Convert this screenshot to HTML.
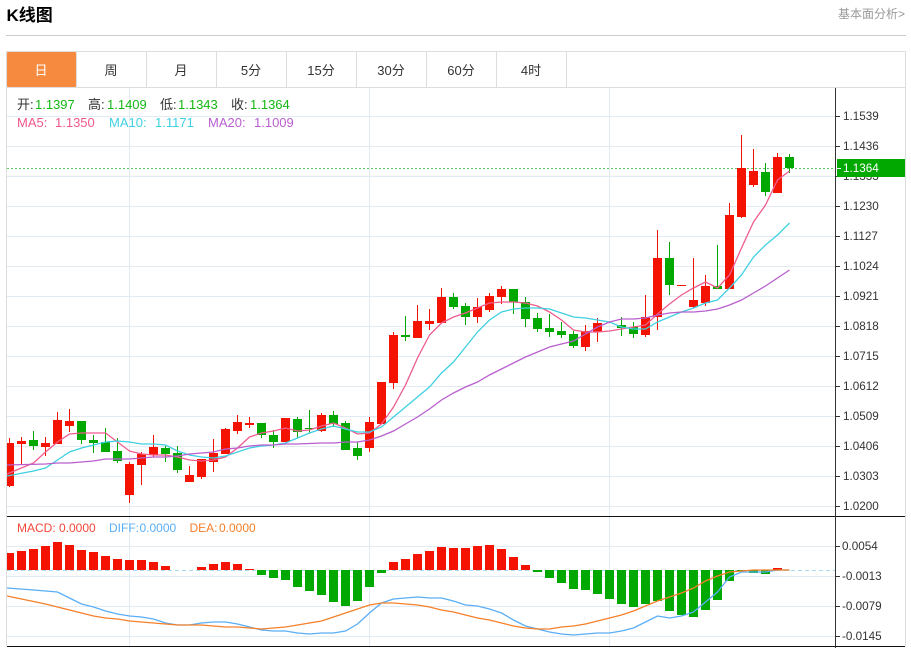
<!DOCTYPE html>
<html><head><meta charset="utf-8"><style>
html,body{margin:0;padding:0;background:#fff;width:911px;height:648px;overflow:hidden}
svg{display:block;position:absolute;left:0;top:0}
text{font-family:"Liberation Sans","Noto Sans CJK SC",sans-serif;font-size:13px}
.t{fill:#333;text-anchor:middle;font-size:13px}
.a{fill:#333;font-size:11.7px}
</style></head><body>
<svg width="911" height="648" viewBox="0 0 911 648">
<defs><clipPath id="c"><rect x="7" y="88" width="828" height="558"/></clipPath></defs>
<text x="6.5" y="21" style="font-size:17px;font-weight:bold;fill:#000">K线图</text>
<text x="905" y="18" text-anchor="end" style="font-size:12px;fill:#999">基本面分析&gt;</text>
<path d="M6 35.5H906" stroke="#ccc" fill="none"/>
<path d="M6.5 52V646M905.5 52V646M6 51.5H906M7 87.5H905" stroke="#ddd" fill="none"/>
<rect x="7" y="52" width="69" height="35" rx="1" fill="#f68b3f"/>
<path d="M76.5 52V87M146.5 52V87M216.5 52V87M286.5 52V87M356.5 52V87M426.5 52V87M496.5 52V87M566.5 52V87" stroke="#ddd" fill="none"/>
<text class="t" x="41" y="75" style="fill:#fff">日</text>
<text class="t" x="111" y="75">周</text>
<text class="t" x="181" y="75">月</text>
<text class="t" x="251" y="75">5分</text>
<text class="t" x="321" y="75">15分</text>
<text class="t" x="391" y="75">30分</text>
<text class="t" x="461" y="75">60分</text>
<text class="t" x="531" y="75">4时</text>
<path d="M7 116.5H835M7 146.5H835M7 176.5H835M7 206.5H835M7 236.5H835M7 266.5H835M7 296.5H835M7 326.5H835M7 356.5H835M7 386.5H835M7 416.5H835M7 446.5H835M7 476.5H835M7 506.5H835M7 546.5H835M7 576.5H835M7 606.5H835M7 636.5H835M129.5 88V646M369.5 88V646M609.5 88V646" stroke="#e2ebf2" fill="none"/>
<path d="M7 168.5H835" stroke="#62c962" stroke-dasharray="2 2" fill="none"/>
<path d="M7 570.5H835" stroke="#a8dcef" stroke-dasharray="4 3" fill="none"/>
<g clip-path="url(#c)" fill="none">
<path stroke="#f31300" d="M9.5 438V487M21.5 437V465M45.5 437V456M57.5 412V444M69.5 409V432M129.5 462V503M141.5 452V485M153.5 435V457M189.5 466V482M201.5 459V479M213.5 439V472M225.5 428V454M237.5 415V434M249.5 417V428M285.5 418V442M321.5 413V432M369.5 417V452M381.5 382V424M393.5 332V389M417.5 305V338M429.5 309V330M441.5 288V323M477.5 298V323M489.5 293V312M501.5 286V304M585.5 325V351M597.5 318V342M645.5 295V337M657.5 230V330M693.5 258V308M705.5 275V306M729.5 203V289M741.5 135V218M753.5 149V187M777.5 153V193"/>
<path stroke="#f31300" stroke-width="9" d="M9.5 443V486M21.5 441V444M45.5 443V447M57.5 420V444M69.5 421V426M129.5 464V495M141.5 454V465M153.5 447V455M189.5 475V482M201.5 459V477M213.5 453V462M225.5 429V454M237.5 422V431M249.5 423V425M285.5 418V442M321.5 415V431M369.5 422V448M381.5 382V424M393.5 335V383M417.5 321V338M429.5 321V324M441.5 297V323M477.5 307V317M489.5 296V310M501.5 289V297M585.5 331V347M597.5 323V332M645.5 317V335M657.5 258V317M681.5 285V286M693.5 300V307M705.5 286V303M729.5 215V289M741.5 168V217M753.5 171V185M777.5 157V193"/>
<path stroke="#00a800" d="M33.5 431V450M81.5 421V444M93.5 435V453M105.5 428V452M117.5 438V463M165.5 446V462M177.5 446V473M261.5 423V438M273.5 430V448M297.5 417V438M309.5 410V433M333.5 411V427M345.5 421V450M357.5 442V460M405.5 316V341M453.5 293V309M465.5 303V325M513.5 289V314M525.5 297V327M537.5 313V332M549.5 314V337M561.5 322V338M573.5 331V348M621.5 317V336M633.5 322V338M669.5 242V295M717.5 245V289M765.5 163V196M789.5 154V173"/>
<path stroke="#00a800" stroke-width="9" d="M33.5 440V446M81.5 421V440M93.5 440V443M105.5 442V452M117.5 451V461M165.5 448V454M177.5 453V470M261.5 423V435M273.5 435V442M297.5 419V432M309.5 428V429M333.5 415V424M345.5 423V450M357.5 448V456M405.5 335V337M453.5 297V307M465.5 306V317M513.5 289V302M525.5 302V319M537.5 318V329M549.5 328V332M561.5 331V335M573.5 334V346M621.5 325V328M633.5 327V334M669.5 258V285M717.5 286V289M765.5 172V192M789.5 157V168"/>
<path stroke="#f05c8e" stroke-width="1.3" d="M7 474L33.5 463L45.5 452L57.5 442L69.5 434L81.5 433L93.5 433L105.5 433L117.5 442L129.5 451L141.5 454L153.5 455L165.5 455L177.5 457L189.5 460L201.5 461L213.5 460L225.5 457L237.5 448L249.5 437L261.5 433L273.5 431L285.5 428L297.5 431L309.5 430L321.5 426L333.5 423L345.5 428L357.5 434L369.5 433L381.5 424L393.5 407L405.5 385L417.5 358L429.5 335L441.5 323L453.5 317L465.5 313L477.5 308L489.5 303L501.5 302L513.5 302L525.5 303L537.5 306L549.5 312L561.5 320L573.5 330L585.5 332L597.5 332L609.5 331L621.5 329L633.5 327L645.5 325L657.5 314L669.5 304L681.5 295L693.5 288L705.5 282L717.5 288L729.5 275L741.5 248L753.5 222L765.5 205L777.5 180L789.5 171"/>
<path stroke="#3fd0e2" stroke-width="1.3" d="M7 476L33.5 471L45.5 468L57.5 460L69.5 452L81.5 448L93.5 445L105.5 442L117.5 441L129.5 442L141.5 444L153.5 444L165.5 445L177.5 451L189.5 455L201.5 457L213.5 458L225.5 456L237.5 452L249.5 448L261.5 446L273.5 445L285.5 443L297.5 438L309.5 433L321.5 429L333.5 426L345.5 429L357.5 432L369.5 432L381.5 427L393.5 417L405.5 407L417.5 397L429.5 387L441.5 373L453.5 362L465.5 347L477.5 332L489.5 320L501.5 312L513.5 309L525.5 308L537.5 308L549.5 309L561.5 313L573.5 317L585.5 318L597.5 320L609.5 322L621.5 327L633.5 329L645.5 329L657.5 322L669.5 317L681.5 312L693.5 308L705.5 303L717.5 300L729.5 288L741.5 275L753.5 257L765.5 245L777.5 235L789.5 223"/>
<path stroke="#b95fcf" stroke-width="1.3" d="M7 465L45.5 464L57.5 463L69.5 463L81.5 462L93.5 461L105.5 459L117.5 459L129.5 459L141.5 458L153.5 457L165.5 457L177.5 456L189.5 454L201.5 453L213.5 452L225.5 449L237.5 448L249.5 446L261.5 445L273.5 445L285.5 444L297.5 444L321.5 443L333.5 443L345.5 442L357.5 442L369.5 440L381.5 436L393.5 431L405.5 424L417.5 417L429.5 409L441.5 400L453.5 393L465.5 387L477.5 382L489.5 375L501.5 369L513.5 363L525.5 357L537.5 352L549.5 347L561.5 344L573.5 341L585.5 334L597.5 327L609.5 322L621.5 319L633.5 319L645.5 318L657.5 315L669.5 313L681.5 312L693.5 312L705.5 311L717.5 309L729.5 305L741.5 300L753.5 293L765.5 286L777.5 278L789.5 270"/>
<path stroke="#f31300" stroke-width="9" d="M9.5 553V570M21.5 551V570M33.5 549V570M45.5 546V570M57.5 542V570M69.5 545V570M81.5 550V570M93.5 552V570M105.5 556V570M117.5 559V570M129.5 560V570M141.5 560V570M153.5 562V570M165.5 566V570M201.5 567V570M213.5 564V570M225.5 562V570M237.5 564V570M249.5 569V570M393.5 562V570M405.5 559V570M417.5 554V570M429.5 551V570M441.5 547V570M453.5 548V570M465.5 548V570M477.5 546V570M489.5 545V570M501.5 549V570M513.5 557V570M525.5 565V570M777.5 568V570"/>
<path stroke="#00a800" stroke-width="9" d="M261.5 570V575M273.5 570V578M285.5 570V580M297.5 570V587M309.5 570V591M321.5 570V595M333.5 570V602M345.5 570V606M357.5 570V601M369.5 570V587M381.5 570V573M537.5 570V572M549.5 570V578M561.5 570V583M573.5 570V589M585.5 570V590M597.5 570V594M609.5 570V599M621.5 570V604M633.5 570V607M645.5 570V604M657.5 570V601M669.5 570V611M681.5 570V615M693.5 570V617M705.5 570V610M717.5 570V600M729.5 570V581M741.5 570V571M753.5 570V573M765.5 570V574"/>
<path stroke="#5aaef5" stroke-width="1.3" d="M7 588L33.5 590L45.5 591L57.5 592L69.5 598L81.5 604L93.5 607L105.5 611L117.5 614L129.5 616L141.5 617L153.5 619L165.5 623L177.5 625L189.5 625L201.5 623L213.5 622L225.5 622L237.5 624L249.5 627L261.5 630L273.5 631L285.5 631L297.5 633L309.5 634L321.5 633L333.5 633L345.5 631L357.5 624L369.5 613L381.5 603L393.5 599L405.5 598L417.5 597L429.5 598L441.5 598L453.5 601L465.5 605L477.5 606L489.5 609L501.5 613L513.5 620L525.5 626L537.5 629L549.5 632L561.5 634L573.5 635L585.5 634L597.5 633L609.5 633L621.5 631L633.5 628L645.5 622L657.5 616L669.5 618L681.5 616L693.5 612L705.5 602L717.5 592L729.5 577L741.5 572L765.5 572L777.5 570L789.5 570"/>
<path stroke="#f5802a" stroke-width="1.3" d="M7 596L45.5 604L57.5 607L69.5 610L81.5 613L93.5 616L105.5 618L117.5 619L129.5 621L141.5 622L153.5 623L165.5 624L177.5 625L201.5 625L213.5 626L225.5 627L237.5 627L249.5 628L261.5 629L273.5 628L285.5 627L297.5 625L309.5 623L321.5 621L333.5 617L345.5 613L357.5 609L369.5 605L381.5 603L393.5 603L405.5 604L417.5 605L429.5 607L441.5 610L453.5 612L465.5 615L477.5 618L489.5 620L501.5 623L513.5 626L525.5 628L537.5 629L549.5 629L561.5 627L573.5 626L585.5 624L597.5 621L609.5 618L621.5 615L633.5 611L645.5 606L657.5 601L669.5 597L681.5 593L693.5 588L705.5 581L717.5 576L729.5 572L741.5 571L753.5 570L789.5 570"/>
</g>
<path d="M7 516.5H905M7 646.5H905" stroke="#111" fill="none"/>
<path d="M835.5 88V648" stroke="#333" fill="none"/>
<path d="M835 116.5H840M835 146.5H840M835 176.5H840M835 206.5H840M835 236.5H840M835 266.5H840M835 296.5H840M835 326.5H840M835 356.5H840M835 386.5H840M835 416.5H840M835 446.5H840M835 476.5H840M835 506.5H840M835 546.5H840M835 576.5H840M835 606.5H840M835 636.5H840" stroke="#333" fill="none"/>
<g>
<text class="a" x="843" y="120">1.1539</text>
<text class="a" x="843" y="150">1.1436</text>
<text class="a" x="843" y="180">1.1333</text>
<text class="a" x="843" y="210">1.1230</text>
<text class="a" x="843" y="240">1.1127</text>
<text class="a" x="843" y="270">1.1024</text>
<text class="a" x="843" y="300">1.0921</text>
<text class="a" x="843" y="330">1.0818</text>
<text class="a" x="843" y="360">1.0715</text>
<text class="a" x="843" y="390">1.0612</text>
<text class="a" x="843" y="420">1.0509</text>
<text class="a" x="843" y="450">1.0406</text>
<text class="a" x="843" y="480">1.0303</text>
<text class="a" x="843" y="510">1.0200</text>
<text class="a" x="842" y="550">0.0054</text>
<text class="a" x="842" y="580">-0.0013</text>
<text class="a" x="842" y="610">-0.0079</text>
<text class="a" x="842" y="640">-0.0145</text>
</g>
<rect x="837" y="159" width="68" height="18" fill="#00a800"/>
<path d="M837 168.5H841" stroke="#fff"/>
<text x="843" y="172" style="font-size:11.7px;fill:#fff">1.1364</text>
<text x="17" y="109" fill="#333">开:</text><text x="35" y="109" fill="#14b814">1.1397</text>
<text x="88" y="109" fill="#333">高:</text><text x="107" y="109" fill="#14b814">1.1409</text>
<text x="160" y="109" fill="#333">低:</text><text x="178" y="109" fill="#14b814">1.1343</text>
<text x="231" y="109" fill="#333">收:</text><text x="250" y="109" fill="#14b814">1.1364</text>
<text x="17" y="127" fill="#f0588c">MA5:</text><text x="55" y="127" fill="#f0588c">1.1350</text>
<text x="109" y="127" fill="#3fd0e2">MA10:</text><text x="155" y="127" fill="#3fd0e2">1.1171</text>
<text x="208" y="127" fill="#b95fcf">MA20:</text><text x="254" y="127" fill="#b95fcf">1.1009</text>
<text x="17" y="532" style="font-size:12px" fill="#f5473a">MACD:</text><text x="59" y="532" style="font-size:12px" fill="#f5473a">0.0000</text>
<text x="109" y="532" style="font-size:12px" fill="#5aaef5">DIFF:</text><text x="139.5" y="532" style="font-size:12px" fill="#5aaef5">0.0000</text>
<text x="189.5" y="532" style="font-size:12px" fill="#f5802a">DEA:</text><text x="219" y="532" style="font-size:12px" fill="#f5802a">0.0000</text>
</svg>
</body></html>
